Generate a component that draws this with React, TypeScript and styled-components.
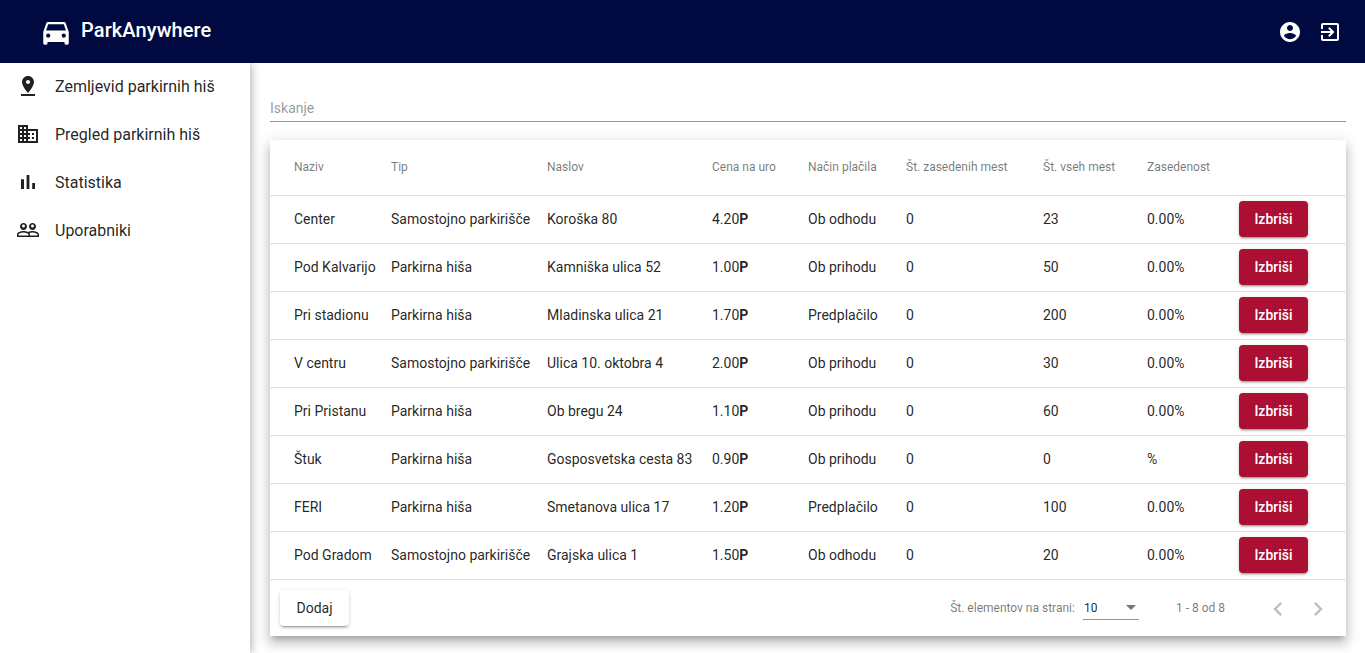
import React from 'react';
import styled, {createGlobalStyle} from 'styled-components';

const GlobalStyle = createGlobalStyle`
  html, body {
    margin: 0;
    height: 100%;
    overflow: hidden;
    font-family: Roboto, "Helvetica Neue", sans-serif;
    color: rgba(0, 0, 0, .87);
  }
`;

const Shell = styled.div`
  display: flex;
  flex-direction: column;
  height: 653px;
`;

const Toolbar = styled.header`
  display: flex;
  align-items: center;
  flex: none;
  height: 63px;
  padding: 0 23px 0 39px;
  background: #000a40;
  color: #fff;
  position: relative;
  z-index: 2;
`;

const Brand = styled.div`
  display: flex;
  align-items: center;
  flex: 1;
  gap: 8px;
  padding-top: 1px;
  font-size: 20px;
  font-weight: 500;

  span {
    padding-bottom: 4px;
    letter-spacing: .1px;
  }
`;

const ToolbarIcons = styled.div`
  display: flex;
  gap: 16px;
  padding-top: 1px;
`;

const Body = styled.div`
  display: flex;
  flex: 1;
  min-height: 0;
`;

const Sidebar = styled.nav`
  flex: none;
  width: 250px;
  box-shadow: 0 0 10px rgba(0, 0, 0, .4);
  position: relative;
  z-index: 1;
`;

const NavItem = styled.a`
  display: flex;
  align-items: center;
  box-sizing: border-box;
  height: 48px;
  padding: 0 0 2px 16px;
  gap: 15px;
  font-size: 16px;
  color: rgba(0, 0, 0, .87);
`;

const Main = styled.main`
  flex: 1;
  min-width: 0;
  padding: 0 19px 0 20px;
`;

const SearchField = styled.div`
  display: flex;
  align-items: flex-end;
  height: 59px;
  padding-bottom: 5px;
  box-sizing: border-box;
  border-bottom: 1px solid #949494;
  font-size: 14px;
  color: rgba(0, 0, 0, .42);
`;

const Card = styled.section`
  margin-top: 18px;
  background: #fff;
  box-shadow: 0 5px 5px -3px rgba(0, 0, 0, .2), 0 8px 10px 1px rgba(0, 0, 0, .14), 0 3px 14px 2px rgba(0, 0, 0, .12);
`;

const Row = styled.div<{$head?: boolean}>`
  display: grid;
  grid-template-columns: 97px 156px 165px 96px 98px 137px 104px 92px 1fr;
  align-items: center;
  box-sizing: border-box;
  height: ${p => (p.$head ? 56 : 48)}px;
  padding: 0 0 1px 24px;
  border-bottom: 1px solid #e0e0e0;
  font-size: ${p => (p.$head ? 12 : 14)}px;
  color: ${p => (p.$head ? 'rgba(0, 0, 0, .54)' : 'rgba(0, 0, 0, .87)')};
  white-space: nowrap;
`;

const Button = styled.button<{$danger?: boolean}>`
  display: block;
  width: 69px;
  height: 36px;
  padding: 0;
  border: 0;
  border-radius: 4px;
  font-family: inherit;
  font-size: 14px;
  font-weight: ${p => (p.$danger ? 500 : 400)};
  background: ${p => (p.$danger ? '#ad0e33' : '#fff')};
  color: ${p => (p.$danger ? '#fff' : 'rgba(0, 0, 0, .87)')};
  box-shadow: 0 3px 1px -2px rgba(0, 0, 0, .2), 0 2px 2px 0 rgba(0, 0, 0, .14), 0 1px 5px 0 rgba(0, 0, 0, .12);
`;

const Footer = styled.div`
  display: flex;
  align-items: center;
  height: 56px;
  padding: 0 14px 0 10px;
  font-size: 12px;
  color: rgba(0, 0, 0, .54);
`;

const PageSize = styled.div`
  display: flex;
  align-items: center;
  margin-left: auto;
`;

const SizeSelect = styled.div`
  display: flex;
  align-items: center;
  justify-content: space-between;
  width: 56px;
  height: 24px;
  margin-left: 8px;
  padding: 0 3px 0 1px;
  box-sizing: border-box;
  border-bottom: 1px solid #949494;
  color: rgba(0, 0, 0, .87);
`;

const Caret = styled.span`
  width: 0;
  height: 0;
  border-left: 5px solid transparent;
  border-right: 5px solid transparent;
  border-top: 5px solid rgba(0, 0, 0, .54);
`;

const RangeLabel = styled.div`
  margin: 0 39px 0 37px;
`;

const PagerIcons = styled.div`
  display: flex;
  gap: 12px;
  padding-top: 2px;
  color: rgba(0, 0, 0, .26);
`;

const Icon = ({d, size = 24}: {d: string; size?: number}) => (
  <svg width={size} height={size} viewBox="0 0 24 24" fill="currentColor" style={{display: 'block'}}>
    <path d={d}/>
  </svg>
);

const icons = {
  car: 'M18.92 6.01C18.72 5.42 18.16 5 17.5 5h-11c-.66 0-1.21.42-1.42 1.01L3 12v8c0 .55.45 1 1 1h1c.55 0 1-.45 1-1v-1h12v1c0 .55.45 1 1 1h1c.55 0 1-.45 1-1v-8l-2.08-5.99zM6.5 16c-.83 0-1.5-.67-1.5-1.5S5.67 13 6.5 13s1.5.67 1.5 1.5S7.33 16 6.5 16zm11 0c-.83 0-1.5-.67-1.5-1.5s.67-1.5 1.5-1.5 1.5.67 1.5 1.5-.67 1.5-1.5 1.5zM5 11l1.5-4.5h11L19 11H5z',
  account: 'M12 2C6.48 2 2 6.48 2 12s4.48 10 10 10 10-4.48 10-10S17.52 2 12 2zm0 3c1.66 0 3 1.34 3 3s-1.34 3-3 3-3-1.34-3-3 1.34-3 3-3zm0 14.2c-2.5 0-4.71-1.28-6-3.22.03-1.99 4-3.08 6-3.08 1.99 0 5.97 1.09 6 3.08-1.29 1.94-3.5 3.22-6 3.22z',
  exit: 'M10.09 15.59L11.5 17l5-5-5-5-1.41 1.41L12.67 11H3v2h9.67l-2.58 2.59zM19 3H5c-1.11 0-2 .9-2 2v4h2V5h14v14H5v-4H3v4c0 1.1.89 2 2 2h14c1.1 0 2-.9 2-2V5c0-1.1-.9-2-2-2z',
  pin: 'M18 8c0-3.31-2.69-6-6-6S6 4.69 6 8c0 4.5 6 11 6 11s6-6.5 6-11zm-8 0c0-1.1.9-2 2-2s2 .9 2 2-.89 2-2 2c-1.1 0-2-.9-2-2zM5 20v2h14v-2H5z',
  domain: 'M12 7V3H2v18h20V7H12zM6 19H4v-2h2v2zm0-4H4v-2h2v2zm0-4H4V9h2v2zm0-4H4V5h2v2zm4 12H8v-2h2v2zm0-4H8v-2h2v2zm0-4H8V9h2v2zm0-4H8V5h2v2zm10 12h-8v-2h2v-2h-2v-2h2v-2h-2V9h8v10zm-2-8h-2v2h2v-2zm0 4h-2v2h2v-2z',
  chart: 'M5 9.2h3V19H5zM10.6 5h2.8v14h-2.8zm5.6 8H19v6h-2.8z',
  people: 'M16.5 13c-1.2 0-3.07.34-4.5 1-1.43-.67-3.3-1-4.5-1C5.33 13 1 14.08 1 16.25V19h22v-2.75c0-2.17-4.33-3.25-6.5-3.25zm-4 4.5h-10v-1.25c0-.54 2.56-1.75 5-1.75s5 1.21 5 1.75v1.25zm9 0H14v-1.25c0-.46-.2-.86-.52-1.22.88-.3 1.96-.53 3.02-.53 2.44 0 5 1.21 5 1.75v1.25zM7.5 12c1.93 0 3.5-1.57 3.5-3.5S9.43 5 7.5 5 4 6.57 4 8.5 5.57 12 7.5 12zm0-5.5c.83 0 1.5.67 1.5 1.5s-.67 1.5-1.5 1.5S6 8.83 6 8s.67-1.5 1.5-1.5zm9 5.5c1.93 0 3.5-1.57 3.5-3.5S18.43 5 16.5 5 13 6.57 13 8.5s1.57 3.5 3.5 3.5zm0-5.5c.83 0 1.5.67 1.5 1.5s-.67 1.5-1.5 1.5S15 8.83 15 8s.67-1.5 1.5-1.5z',
  prev: 'M15.41 7.41L14 6l-6 6 6 6 1.41-1.41L10.83 12z',
  next: 'M10 6L8.59 7.41 13.17 12l-4.58 4.59L10 18l6-6z',
};

const navItems = [
  {icon: icons.pin, label: 'Zemljevid parkirnih hiš'},
  {icon: icons.domain, label: 'Pregled parkirnih hiš'},
  {icon: icons.chart, label: 'Statistika'},
  {icon: icons.people, label: 'Uporabniki'},
];

const headers = ['Naziv', 'Tip', 'Naslov', 'Cena na uro', 'Način plačila', 'Št. zasedenih mest', 'Št. vseh mest', 'Zasedenost', ''];

const rows = [
  ['Center', 'Samostojno parkirišče', 'Koroška 80', '4.20', 'Ob odhodu', '0', '23', '0.00%'],
  ['Pod Kalvarijo', 'Parkirna hiša', 'Kamniška ulica 52', '1.00', 'Ob prihodu', '0', '50', '0.00%'],
  ['Pri stadionu', 'Parkirna hiša', 'Mladinska ulica 21', '1.70', 'Predplačilo', '0', '200', '0.00%'],
  ['V centru', 'Samostojno parkirišče', 'Ulica 10. oktobra 4', '2.00', 'Ob prihodu', '0', '30', '0.00%'],
  ['Pri Pristanu', 'Parkirna hiša', 'Ob bregu 24', '1.10', 'Ob prihodu', '0', '60', '0.00%'],
  ['Štuk', 'Parkirna hiša', 'Gosposvetska cesta 83', '0.90', 'Ob prihodu', '0', '0', '%'],
  ['FERI', 'Parkirna hiša', 'Smetanova ulica 17', '1.20', 'Predplačilo', '0', '100', '0.00%'],
  ['Pod Gradom', 'Samostojno parkirišče', 'Grajska ulica 1', '1.50', 'Ob odhodu', '0', '20', '0.00%'],
];

function App() {
  return (
    <Shell>
      <GlobalStyle/>
      <Toolbar>
        <Brand>
          <Icon d={icons.car} size={34}/>
          <span>ParkAnywhere</span>
        </Brand>
        <ToolbarIcons>
          <Icon d={icons.account}/>
          <Icon d={icons.exit}/>
        </ToolbarIcons>
      </Toolbar>
      <Body>
        <Sidebar>
          {navItems.map(item => (
            <NavItem key={item.label}>
              <Icon d={item.icon}/>
              <span>{item.label}</span>
            </NavItem>
          ))}
        </Sidebar>
        <Main>
          <SearchField>Iskanje</SearchField>
          <Card>
            <Row $head>
              {headers.map((h, i) => <div key={i}>{h}</div>)}
            </Row>
            {rows.map(r => (
              <Row key={r[0]}>
                {r.map((cell, i) => (
                  <div key={i}>{cell}{i === 3 && <b>P</b>}</div>
                ))}
                <div><Button $danger>Izbriši</Button></div>
              </Row>
            ))}
            <Footer>
              <Button>Dodaj</Button>
              <PageSize>
                Št. elementov na strani:
                <SizeSelect>10<Caret/></SizeSelect>
              </PageSize>
              <RangeLabel>1 - 8 od 8</RangeLabel>
              <PagerIcons>
                <Icon d={icons.prev} size={28}/>
                <Icon d={icons.next} size={28}/>
              </PagerIcons>
            </Footer>
          </Card>
        </Main>
      </Body>
    </Shell>
  );
}

export default App;
